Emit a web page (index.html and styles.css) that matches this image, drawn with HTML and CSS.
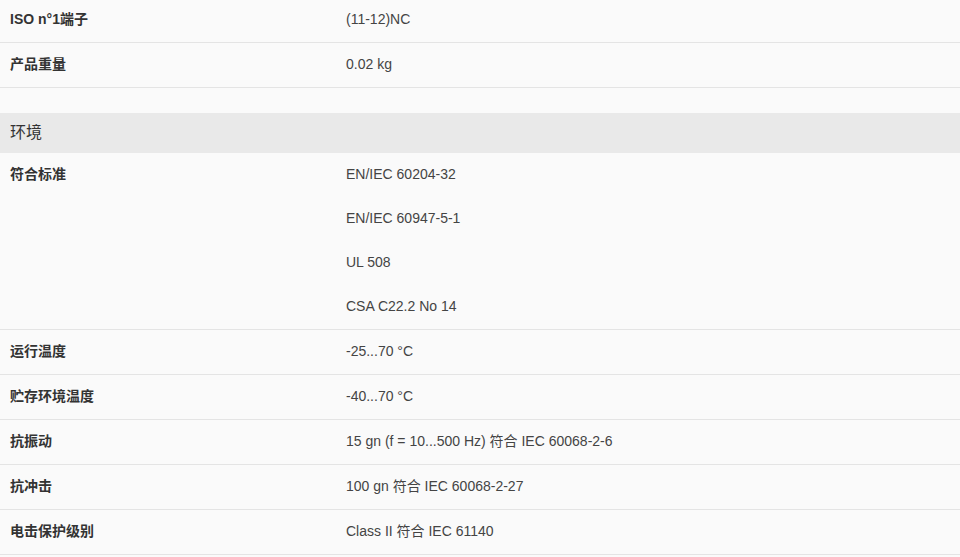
FILE: index.html
```html
<!DOCTYPE html>
<html lang="zh-CN">
<head>
<meta charset="utf-8">
<title>规格</title>
<link rel="stylesheet" href="styles.css">
</head>
<body>
<div class="specs">
  <div class="group first">
    <div class="row"><div class="label">ISO n°1端子</div><div class="value"><span class="line">(11-12)NC</span></div></div>
    <div class="row"><div class="label">产品重量</div><div class="value"><span class="line">0.02 kg</span></div></div>
  </div>
  <div class="section">环境</div>
  <div class="group">
    <div class="row"><div class="label">符合标准</div><div class="value"><span class="line">EN/IEC 60204-32</span><span class="line">EN/IEC 60947-5-1</span><span class="line">UL 508</span><span class="line">CSA C22.2 No 14</span></div></div>
    <div class="row"><div class="label">运行温度</div><div class="value"><span class="line">-25...70 °C</span></div></div>
    <div class="row"><div class="label">贮存环境温度</div><div class="value"><span class="line">-40...70 °C</span></div></div>
    <div class="row"><div class="label">抗振动</div><div class="value"><span class="line">15 gn (f = 10...500 Hz) 符合 IEC 60068-2-6</span></div></div>
    <div class="row"><div class="label">抗冲击</div><div class="value"><span class="line">100 gn 符合 IEC 60068-2-27</span></div></div>
    <div class="row"><div class="label">电击保护级别</div><div class="value"><span class="line">Class II 符合 IEC 61140</span></div></div>
  </div>
</div>
</body>
</html>
```
FILE: styles.css
```css
html, body {
  margin: 0;
  padding: 0;
  background: #fafafa;
}
body {
  font-family: "Liberation Sans", Arial, "Noto Sans CJK SC", sans-serif;
  font-size: 14px;
  color: #333;
  overflow: hidden;
}
.specs {
  display: flex;
  flex-direction: column;
  margin-top: -2px;
}
.group.first {
  margin-bottom: 25px;
}
.row {
  display: flex;
  border-bottom: 1px solid #e4e4e4;
}
.label {
  flex: 0 0 336px;
  padding-left: 10px;
  padding-bottom: 2px;
  font-weight: bold;
  color: #333;
  height: 42px;
  line-height: 42px;
}
.value {
  display: flex;
  flex-direction: column;
  color: #444;
}
.line {
  display: block;
  height: 42px;
  line-height: 42px;
  padding-bottom: 2px;
}
.section {
  background: #e9e9e9;
  height: 40px;
  line-height: 39px;
  padding-left: 10px;
  font-size: 16px;
  color: #333;
}
```
